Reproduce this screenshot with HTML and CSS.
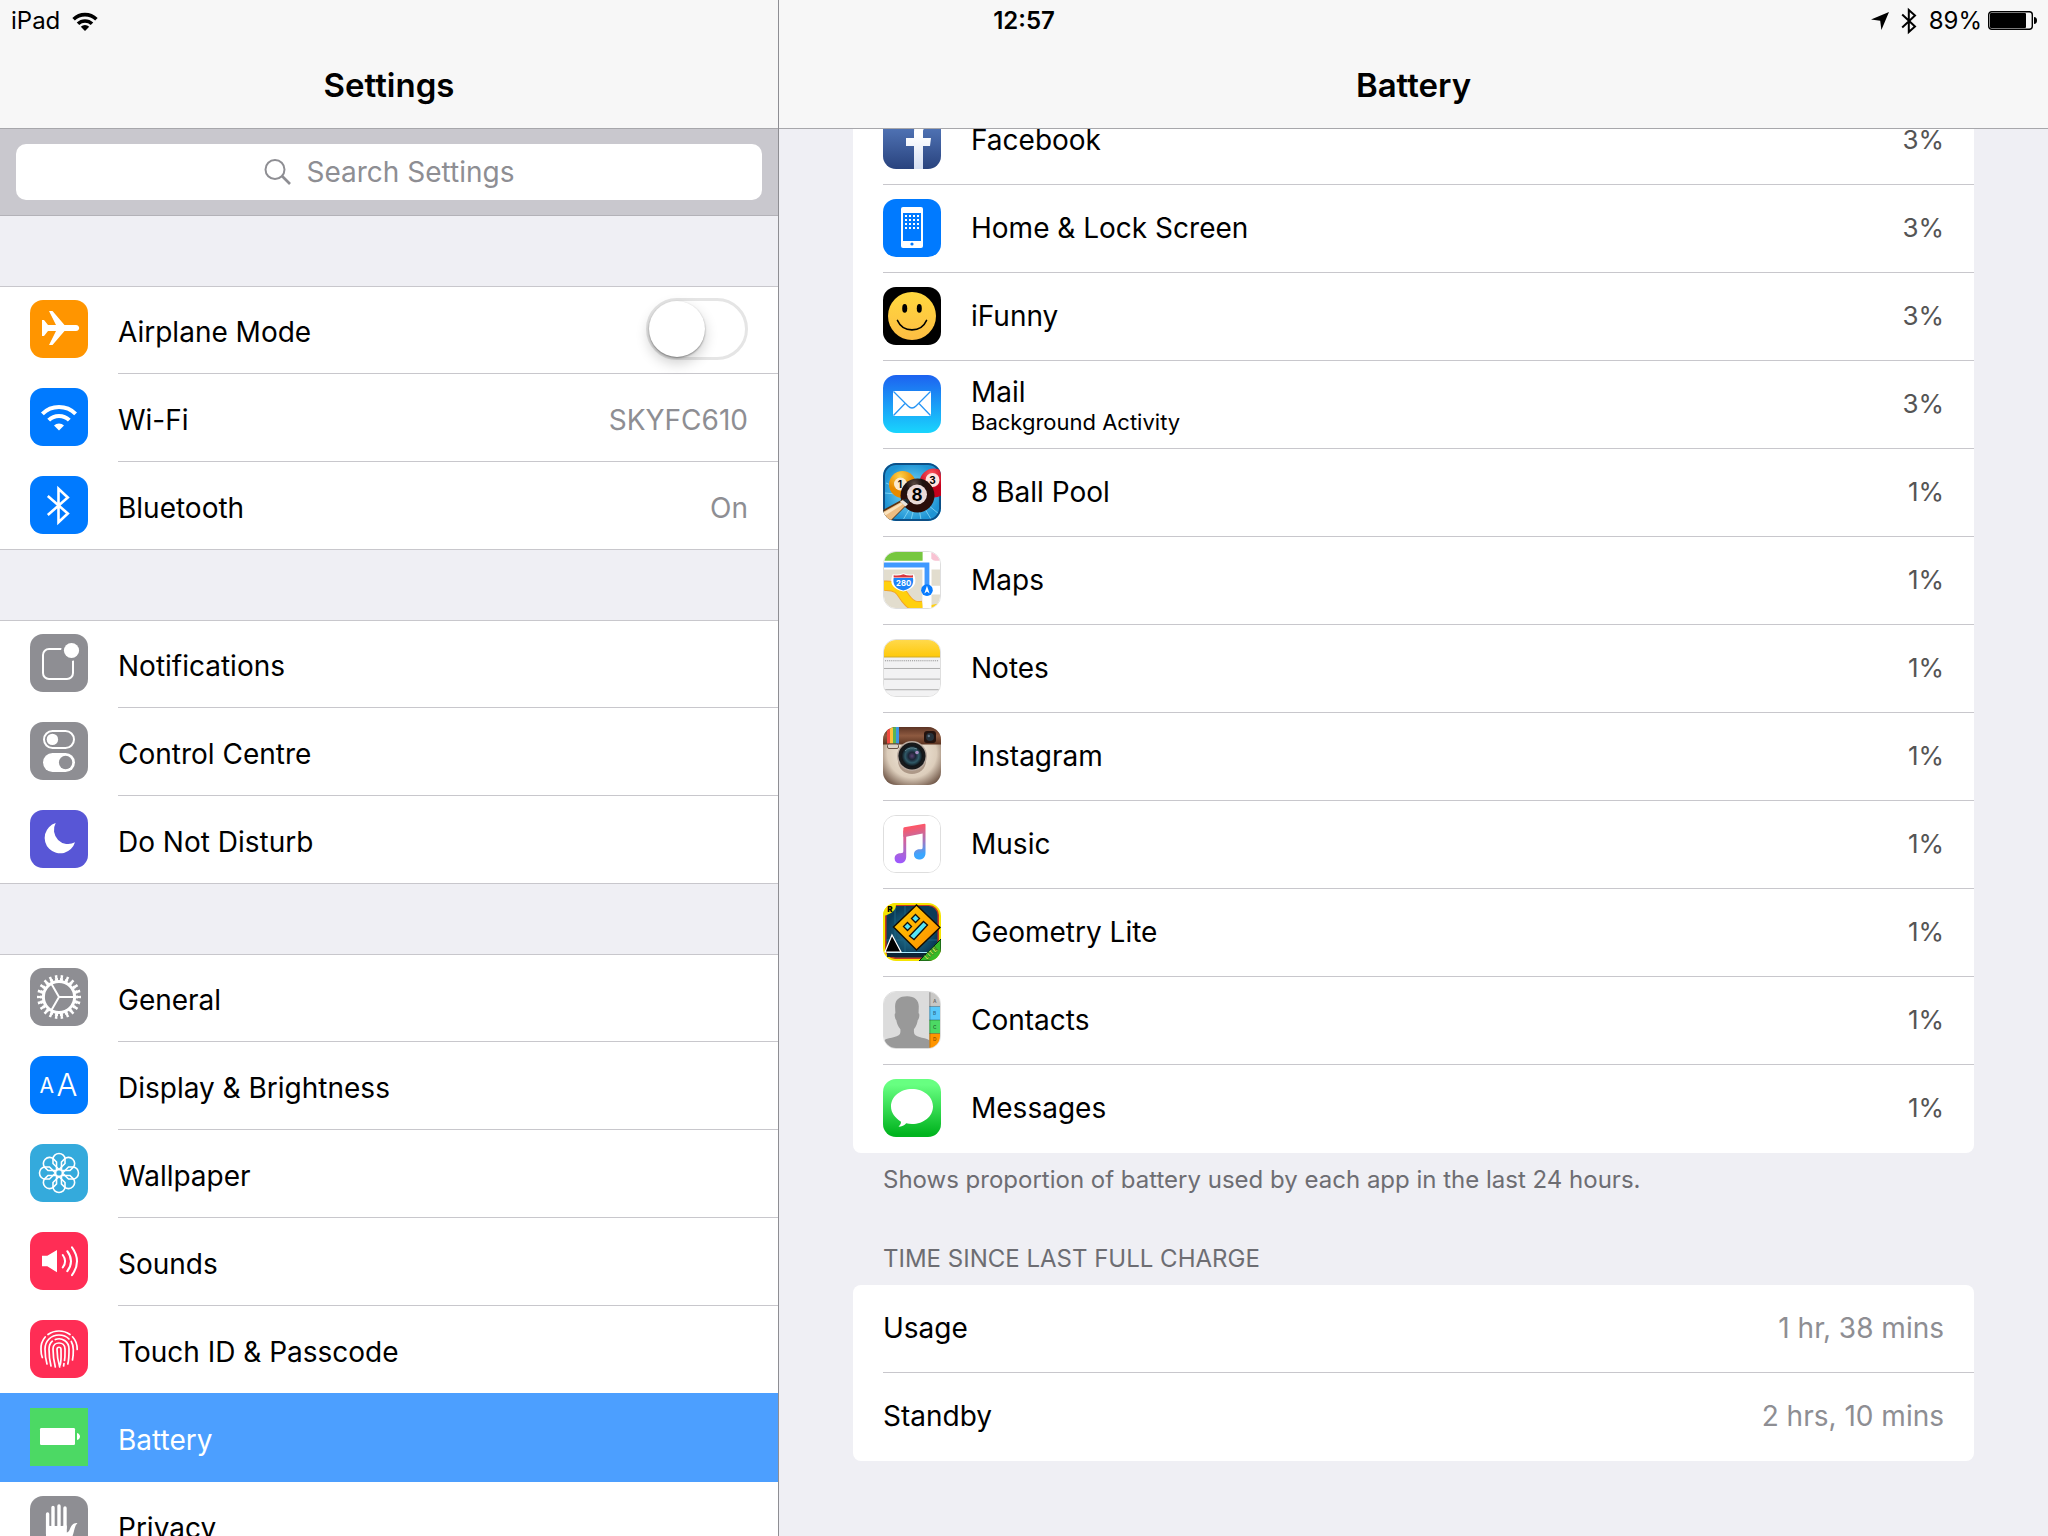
FILE: index.html
```html
<!DOCTYPE html>
<html lang="en-GB">
<head>
<meta charset="utf-8">
<meta name="viewport" content="width=device-width, initial-scale=1">
<title>Settings</title>
<link rel="stylesheet" href="styles.css">
</head>
<body>
<div class="status">
  <div class="status-side">
    <span>iPad</span>
    <svg class="status-wifi" viewBox="0 0 26 20" aria-hidden="true"><g fill="none" stroke="#000" stroke-width="3.6"><path d="M1.6 8.2a16.4 16.4 0 0 1 22.8 0"/><path d="M6 12.8a10 10 0 0 1 14 0"/></g><path d="M8.8 15.8a6 6 0 0 1 8.4 0L13 20z"/></svg>
  </div>
  <time class="clock">12:57</time>
  <div class="status-side status-end">
    <svg class="status-loc" viewBox="0 0 18 18" aria-hidden="true"><path d="M18 0 10.400 18 9.200 8.800 0 7.600z"/></svg>
    <svg class="status-bt" viewBox="0 0 16 28" aria-hidden="true"><path d="M1.200 7.500 14 19.500 7.800 25V3L14 8.500 1.200 20.500" fill="none" stroke="#000" stroke-width="2"/></svg>
    <span>89%</span>
    <svg class="status-cell" viewBox="0 0 49 19" aria-hidden="true"><rect x=".7" y=".7" width="43.600" height="17.600" rx="3" fill="none" stroke="#000" stroke-width="1.400"/><rect x="2" y="2" width="36" height="15" rx="1"/><path d="M46 6c2 0 3 1.500 3 3.500S48 13 46 13z"/></svg>
  </div>
</div>
<div class="screen">
  <section class="pane sidebar" aria-label="Settings">
    <header class="bar"><h1 class="title">Settings</h1></header>
    <div class="search">
      <label class="search-box">
        <svg class="search-icon" viewBox="0 0 27 26" aria-hidden="true"><g fill="none" stroke="#8e8e93" stroke-width="2"><circle cx="11" cy="10.500" r="9.500"/><path d="m18 17 8 8" stroke-width="2.600"/></g></svg>
        <input class="search-input" type="search" placeholder="Search Settings" aria-label="Search Settings">
      </label>
    </div>
    <nav class="groups">
      <ul class="group">
        <li><label class="row">
          <svg class="icon" viewBox="0 0 58 58"><rect width="58" height="58" fill="#ff9500"/><path fill="#fff" d="M12 20h2l4 5h8L19 11h3.500L34.500 25H46c2 0 3.200 1.500 3.200 3s-1.200 3-3.200 3H34.500l-12 14H19l7-14h-8l-4 5h-2z"/></svg>
          <span class="cell"><span class="name">Airplane Mode</span><input class="switch" type="checkbox" role="switch"></span></label></li>
        <li><a class="row" href="#wifi">
          <svg class="icon" viewBox="0 0 58 58"><rect width="58" height="58" fill="#007aff"/><g fill="none" stroke="#fff" stroke-width="4"><path d="M12.400 25.900a23.500 23.500 0 0 1 33.200 0"/><path d="M18.700 32.200a14.500 14.500 0 0 1 20.600 0"/></g><path fill="#fff" d="M24 37.500a7 7 0 0 1 10 0l-5 5z"/></svg>
          <span class="cell"><span class="name">Wi-Fi</span><span class="value">SKYFC610</span></span></a></li>
        <li><a class="row" href="#bluetooth">
          <svg class="icon" viewBox="0 0 58 58"><rect width="58" height="58" fill="#007aff"/><path fill="none" stroke="#fff" stroke-width="2.600" d="m17.800 20 20 17.500-9.300 8.800V12.700l9.300 8.800L17.800 39"/></svg>
          <span class="cell"><span class="name">Bluetooth</span><span class="value">On</span></span></a></li>
      </ul>
      <ul class="group">
        <li><a class="row" href="#notifications">
          <svg class="icon" viewBox="0 0 58 58"><rect width="58" height="58" fill="#8e8e93"/><rect x="13" y="15" width="30" height="30" rx="6" fill="none" stroke="#fff" stroke-width="2"/><circle cx="41.500" cy="16.500" r="10.500" fill="#8e8e93"/><circle cx="41.500" cy="16.500" r="7.600" fill="#fff"/></svg>
          <span class="cell"><span class="name">Notifications</span></span></a></li>
        <li><a class="row" href="#control">
          <svg class="icon" viewBox="0 0 58 58"><rect width="58" height="58" fill="#8e8e93"/><rect x="14" y="9" width="30" height="17" rx="8.500" fill="none" stroke="#fff" stroke-width="2"/><circle cx="22.400" cy="17.400" r="5.700" fill="#fff"/><rect x="13" y="31" width="32" height="19" rx="9.500" fill="#fff"/><circle cx="35.600" cy="40.500" r="6.700" fill="#8e8e93"/></svg>
          <span class="cell"><span class="name">Control Centre</span></span></a></li>
        <li><a class="row" href="#dnd">
          <svg class="icon" viewBox="0 0 58 58"><rect width="58" height="58" fill="#5856d6"/><path fill="#fff" d="M25.700 13A15.500 15.500 0 1 0 45 32.300 14.200 14.200 0 0 1 25.700 13z"/></svg>
          <span class="cell"><span class="name">Do Not Disturb</span></span></a></li>
      </ul>
      <ul class="group">
        <li><a class="row" href="#general">
          <svg class="icon" viewBox="0 0 58 58"><rect width="58" height="58" fill="#8e8e93"/><g fill="none" stroke="#fff"><circle cx="29" cy="29" r="15.600" stroke-width="3"/><circle cx="29" cy="29" r="17.600" stroke-width="3" pathLength="22" stroke-dasharray=".6 .4" stroke-dashoffset=".3"/><circle cx="29" cy="29" r="20.300" stroke-width="3.400" pathLength="22" stroke-dasharray=".42 .58" stroke-dashoffset=".21"/><path stroke-width="2" d="M29 29h15M29 29l-7.500-13M29 29l-7.500 13"/></g></svg>
          <span class="cell"><span class="name">General</span></span></a></li>
        <li><a class="row" href="#display">
          <svg class="icon" viewBox="0 0 58 58"><rect width="58" height="58" fill="#007aff"/><g fill="#fff" font-family="Inter, sans-serif"><text x="9.500" y="37.300" font-size="21">A</text><text x="26.500" y="39.700" font-size="31" font-weight="300">A</text></g></svg>
          <span class="cell"><span class="name">Display &amp; Brightness</span></span></a></li>
        <li><a class="row" href="#wallpaper">
          <svg class="icon" viewBox="0 0 58 58"><defs><path id="petal" d="M29 25.500 23 19.500V15a6 5.500 0 0 1 12 0v4.500z"/></defs><rect width="58" height="58" fill="#34aadc"/><g fill="none" stroke="#fff" stroke-width="1.600"><circle cx="29" cy="29" r="3.500"/><use href="#petal"/><use href="#petal" transform="rotate(45 29 29)"/><use href="#petal" transform="rotate(90 29 29)"/><use href="#petal" transform="rotate(135 29 29)"/><use href="#petal" transform="rotate(180 29 29)"/><use href="#petal" transform="rotate(225 29 29)"/><use href="#petal" transform="rotate(270 29 29)"/><use href="#petal" transform="rotate(315 29 29)"/></g></svg>
          <span class="cell"><span class="name">Wallpaper</span></span></a></li>
        <li><a class="row" href="#sounds">
          <svg class="icon" viewBox="0 0 58 58"><rect width="58" height="58" fill="#ff2d55"/><path fill="#fff" d="M12 23.700h5.300L27 18v22.300l-9.700-6H12z"/><path fill="none" stroke="#fff" stroke-width="2" stroke-linecap="round" d="M32.800 23q4.600 6.200 0 12.400M37.300 19.200q7.400 10 0 20M42 15.300q10 13.900 0 27.800"/></svg>
          <span class="cell"><span class="name">Sounds</span></span></a></li>
        <li><a class="row" href="#touchid">
          <svg class="icon" viewBox="0 0 58 58"><rect width="58" height="58" fill="#ff2d55"/><g fill="none" stroke="#fff" stroke-width="1.700" stroke-linecap="round"><path d="M18 14.500c6.500-4.700 15.500-4.700 22 0M15.200 17c-3 3.500-4.500 8-4.200 12.500 0 3 .3 5.500 1.300 8M42.500 16.800c3.200 3.500 4.800 8 4.700 12.700"/><path d="M17 44c-1.300-4.500-2-9-2-15 0-8 6-14 14-14 4 0 7.500 1.300 10 4M41.300 21.500c1.500 2.500 2 5 2 8 .1 4-.1 7-.8 10.500"/><path d="M21 46c-1.300-5-2-11-2-17 0-3.500 1.300-6 3.300-7.800M25.300 19.500c6.500-2.500 13.700 2 13.700 9.500.1 6 0 10-1.200 15"/><path d="M25.300 47C23.800 41 23 35 23 29c0-8 12-8 12 0 0 4.500.2 8-.5 11.500M34 43.500l-.4 2.500"/><path d="M29.700 47C28 41 27 35 27 29.500c0-3 4-3 4 0 0 6.500.5 10.500-.8 15.500"/></g></svg>
          <span class="cell"><span class="name">Touch ID &amp; Passcode</span></span></a></li>
        <li><a class="row selected" href="#battery" aria-current="page">
          <svg class="icon" viewBox="0 0 58 58"><rect width="58" height="58" fill="#4cd964"/><rect x="10" y="20" width="35" height="17" rx="1.300" fill="#fff"/><path fill="#fff" d="M47 25c2 .5 3 2 3 3.500s-1 3-3 3.500z"/></svg>
          <span class="cell"><span class="name">Battery</span></span></a></li>
        <li><a class="row" href="#privacy">
          <svg class="icon" viewBox="0 0 58 58"><rect width="58" height="58" fill="#8e8e93"/><g fill="none" stroke="#fff" stroke-width="3.400" stroke-linecap="round"><path d="M17.600 18v20M23 11.500v20M29 10v20M35 12v20"/></g><path fill="#fff" d="M16 29.500c6 .8 14 .8 20.800 0v7c1 0 2-1 2.700-2.500 1.500-4 3.500-7.500 8-7-2 2-2.500 4-3.500 8-1.500 6-4 14-10 16H22c-4-2-6-7-6-12z"/></svg>
          <span class="cell"><span class="name">Privacy</span></span></a></li>
      </ul>
    </nav>
  </section>

  <main class="pane detail">
    <header class="bar"><h2 class="title">Battery</h2></header>
    <div class="scroller">
      <ul class="card usage">
        <li class="app">
          <svg class="icon" viewBox="0 0 58 58"><defs><linearGradient id="fb" x2="0" y2="1"><stop stop-color="#5f86ca"/><stop offset="1" stop-color="#29437e"/></linearGradient><linearGradient id="fw" x2="0" y2="1"><stop offset=".3" stop-color="#fff"/><stop offset="1" stop-color="#d5dff2"/></linearGradient></defs><rect width="58" height="58" fill="url(#fb)"/><path fill="url(#fw)" d="M31 58V35h-8v-8h8v-6c0-8 4-12 11-12h7v8h-5c-3 0-4 1-4 4v6h8l-1 8h-7v23z"/></svg>
          <span class="name">Facebook</span><span class="share">3%</span></li>
        <li class="app">
          <svg class="icon" viewBox="0 0 58 58"><defs><pattern id="dots" x="22" y="16" width="4" height="4" patternUnits="userSpaceOnUse"><rect width="2" height="2" fill="#fff"/></pattern></defs><rect width="58" height="58" fill="#007aff"/><rect x="18" y="8" width="22" height="41" rx="2" fill="#fff"/><path fill="#007aff" d="M20 14h18v28H20z"/><path fill="url(#dots)" d="M22 16h14v14H22zM22 38h14v2H22z"/><circle cx="29" cy="45" r="1.600" fill="#007aff"/></svg>
          <span class="name">Home &amp; Lock Screen</span><span class="share">3%</span></li>
        <li class="app">
          <svg class="icon" viewBox="0 0 58 58"><defs><linearGradient id="smile" x2="0" y2="1"><stop stop-color="#ffd83e"/><stop offset="1" stop-color="#fdbd43"/></linearGradient></defs><rect width="58" height="58"/><circle cx="29" cy="29" r="24" fill="url(#smile)"/><ellipse cx="21.700" cy="21.400" rx="2.500" ry="4.400"/><ellipse cx="36.300" cy="21.400" rx="2.500" ry="4.400"/><path fill="none" stroke="#000" stroke-width="1.700" stroke-linecap="round" d="M14.500 33.500c5.500 12.500 23.500 12.500 29 0"/></svg>
          <span class="name">iFunny</span><span class="share">3%</span></li>
        <li class="app">
          <svg class="icon" viewBox="0 0 58 58"><defs><linearGradient id="mail" x2="0" y2="1"><stop stop-color="#1d62f0"/><stop offset="1" stop-color="#19d5fd"/></linearGradient></defs><rect width="58" height="58" fill="url(#mail)"/><rect x="10" y="16" width="38" height="25" rx="1" fill="#fff"/><path fill="none" stroke="#2795f5" stroke-width="1.300" d="m10.500 16.500 14.500 14.500q4 4 8 0L47.500 16.500M10.500 40.500 22 28.500M47.500 40.500 36 28.500"/></svg>
          <span class="name">Mail<small class="note">Background Activity</small></span><span class="share">3%</span></li>
        <li class="app">
          <svg class="icon" viewBox="0 0 58 58"><defs><radialGradient id="felt"><stop stop-color="#8be4ff"/><stop offset="1" stop-color="#1f94d4"/></radialGradient><radialGradient id="ball1" cx=".4" cy=".2"><stop stop-color="#ffd24a"/><stop offset="1" stop-color="#e88a00"/></radialGradient><radialGradient id="ball3" cx=".4" cy=".2"><stop stop-color="#ff5b62"/><stop offset="1" stop-color="#c4001c"/></radialGradient><radialGradient id="ball8" cx=".4" cy=".15"><stop stop-color="#5b4a42"/><stop offset=".5" stop-color="#1d1210"/><stop offset="1" stop-color="#2b0d0a"/></radialGradient></defs><rect width="58" height="58" fill="url(#felt)"/><path stroke="#a6ecff" stroke-width=".6" d="M34 33 2 30M34 33 3 20M34 33l-6 24M34 33l4 24M34 33l14 23M34 33l22 18M34 33 20 57"/><rect x="1" y="1" width="56" height="56" rx="12" fill="none" stroke="#0d4f86" stroke-width="2"/><circle cx="19.500" cy="21.500" r="13.500" fill="url(#ball1)"/><circle cx="17.500" cy="21" r="6.500" fill="#fbead0"/><circle cx="51" cy="20" r="14.500" fill="url(#ball3)"/><circle cx="49.500" cy="17" r="7" fill="#ffe3e0"/><circle cx="34.500" cy="32.500" r="17" fill="url(#ball8)"/><circle cx="34" cy="31.500" r="10" fill="#ead9d8"/><g font-family="Inter, sans-serif" font-weight="700" text-anchor="middle"><text x="17" y="24.500" font-size="10">1</text><text x="49.500" y="20.500" font-size="10">3</text><text x="34" y="37.500" font-size="17">8</text></g><path fill="#5c3212" d="m0 47 20-11 6 4L8 58H0z"/><path fill="#edbd83" d="m0 49 18-10 4.500 3.500L7 58H0z"/><path fill="#fbe3bd" d="m0 50 18-10 1.500 1.500L0 54z"/><path fill="#e8e4df" d="m17 38.500 3-1.500 5 4-2.500 2.500z"/><path fill="#1d2a35" d="m20 37 3.500-1.500q3 2 2.500 4L25 41z"/></svg>
          <span class="name">8 Ball Pool</span><span class="share">1%</span></li>
        <li class="app">
          <svg class="icon outlined" viewBox="0 0 58 58"><rect width="58" height="58" fill="#fff"/><path fill="#76c73f" d="M0 0h40v9H0z"/><path fill="#f8c3d3" d="M49 0h9v9h-5q-2 0-4-2z"/><path fill="#e2ddce" d="M0 18h40v40H0zM49 18h9v17h-9zM49 44h9v14h-9z"/><path fill="none" stroke="#f3a52b" stroke-width="11" d="M0 35c18-1 18 9 24 15 5 6 9 7 16 6"/><path fill="none" stroke="#ffd00e" stroke-width="9" d="M0 35c18-1 18 9 24 15 5 6 9 7 16 6"/><path fill="#ffd00e" d="M49 55l9-2v5h-9z"/><path fill="#fff" d="M40 9h9v49h-9z"/><path fill="none" stroke="#4099ff" stroke-width="5" d="M0 13.500h44.500V40"/><path fill="#fff" d="M9 23q5 1 11-1 6 2 11 1 6 14-11 18Q3 37 9 23z"/><path fill="#1c83f8" d="M10 27h20q2 10-10 13Q8 37 10 27z"/><path fill="#d9343e" d="M10 24q5 1 10-1 5 2 10 1v2.500H10z"/><text x="20.300" y="35" font-family="Inter, sans-serif" font-size="8" font-weight="700" fill="#fff" text-anchor="middle">280</text><circle cx="44.500" cy="39.500" r="6" fill="#087cff"/><path fill="#fff" d="m44.500 35 2.700 8-2.700-2-2.700 2z"/></svg>
          <span class="name">Maps</span><span class="share">1%</span></li>
        <li class="app">
          <svg class="icon outlined" viewBox="0 0 58 58"><defs><linearGradient id="pad" x2="0" y2="1"><stop stop-color="#ffd94b"/><stop offset="1" stop-color="#fec90a"/></linearGradient></defs><rect width="58" height="58" fill="#f2f2f3"/><path fill="url(#pad)" d="M0 0h58v17.500H0z"/><path fill="#cfab2d" d="M0 17h58v1H0z"/><path stroke="#888" stroke-dasharray="1 1" d="M1 21.500h56"/><path stroke="#aaa" d="M0 29.500h58M0 40.500h58M0 51.500h58"/></svg>
          <span class="name">Notes</span><span class="share">1%</span></li>
        <li class="app">
          <svg class="icon" viewBox="0 0 58 58"><defs><radialGradient id="body" cx=".5" cy=".45" r=".65"><stop stop-color="#f5ede0"/><stop offset=".65" stop-color="#dccdbb"/><stop offset="1" stop-color="#705748"/></radialGradient><linearGradient id="hide" x2="0" y2="1"><stop stop-color="#5c3425"/><stop offset=".5" stop-color="#8e5a40"/><stop offset="1" stop-color="#5a3220"/></linearGradient><radialGradient id="lens"><stop stop-color="#594071"/><stop offset=".35" stop-color="#1c2637"/><stop offset=".65" stop-color="#2f5a68"/><stop offset="1" stop-color="#0c1015"/></radialGradient></defs><rect width="58" height="58" fill="url(#body)"/><path fill="url(#hide)" d="M0 0h58v17.500H0z"/><path fill="#f0483e" d="M4 0h3v16.500H4z"/><path fill="#fcc13a" d="M7 0h3v16.500H7z"/><path fill="#58b454" d="M10 0h3v16.500h-3z"/><path fill="#3e95e4" d="M13 0h3v16.500h-3z"/><rect x="4.500" y="17" width="11" height="4.500" rx="1.500" fill="#ddd3c8" stroke="#6b5244"/><rect x="41" y="4" width="12" height="12" rx="3" fill="#24130f"/><circle cx="47" cy="10" r="4" fill="#27323b"/><circle cx="45.800" cy="9" r="1.200" fill="#678"/><ellipse cx="29" cy="34" rx="14" ry="13" fill="#8a7261" opacity=".6"/><circle cx="29" cy="29" r="15" fill="#b9aaa0"/><circle cx="29" cy="29" r="13.600" fill="#17191b"/><circle cx="29" cy="29" r="10.500" fill="url(#lens)"/><circle cx="34" cy="25.500" r="1.800" fill="#a58ac1"/><path d="M22 24q5-5 12-2" fill="none" stroke="#82aab5" stroke-width="1" opacity=".7"/></svg>
          <span class="name">Instagram</span><span class="share">1%</span></li>
        <li class="app">
          <svg class="icon outlined" viewBox="0 0 58 58"><defs><linearGradient id="tune" gradientUnits="userSpaceOnUse" x1="28" y1="10" x2="36" y2="46"><stop offset=".05" stop-color="#fc5769"/><stop offset=".5" stop-color="#a476c0"/><stop offset=".85" stop-color="#3ba6ff"/></linearGradient><linearGradient id="tune2" gradientUnits="userSpaceOnUse" x1="24" y1="12" x2="14" y2="48"><stop offset=".05" stop-color="#ff5668"/><stop offset=".6" stop-color="#b16ac4"/><stop offset="1" stop-color="#9c57ff"/></linearGradient></defs><rect width="58" height="58" fill="#fff"/><path fill="url(#tune2)" d="M20 15h3v27c0 5-3 7-7 7-3 0-5-2-5-5 0-4 3-5.500 6-5.500 2.500 0 3-.5 3-2.500z"/><path fill="url(#tune)" d="M20 13q0-1 1-1.300L42 8q1 0 1 1v29c0 5-3 7-7 7-3 0-5-2-5-5 0-4 3-5.500 6-5.500 2.500 0 3-.5 3-2.500V18l-17 3.500h-3z"/></svg>
          <span class="name">Music</span><span class="share">1%</span></li>
        <li class="app">
          <svg class="icon" viewBox="0 0 58 58"><defs><radialGradient id="night"><stop stop-color="#287f9c"/><stop offset="1" stop-color="#0a3b58"/></radialGradient><linearGradient id="cube" x2="1" y2="1"><stop stop-color="#ffcf00"/><stop offset="1" stop-color="#ff8b00"/></linearGradient></defs><rect width="58" height="58" fill="#f5e400"/><rect x="2" y="2" width="54" height="54" rx="10" fill="#c73a1c"/><rect x="3.500" y="3" width="51" height="51.500" rx="9" fill="url(#night)"/><path stroke="#1d6582" d="M12 3v51M22 3v51M3 37h51"/><path fill="#0b2436" d="M4 50h50v4H4z"/><path stroke="#a9ecff" d="M4 49.500h48"/><path fill="#000" stroke="#fff" stroke-width="1.200" d="m9 32 9 17H2z"/><path fill="url(#cube)" stroke="#150d00" stroke-width="1.500" d="m33.500 2 23.500 22.500L33.500 47 10.500 24z"/><g fill="#55e5f5" stroke="#111" stroke-width="1.300"><path d="m24.500 19.500 4 4-4 4-4-4zM32.500 11.500l4 4-4 4-4-4zM40.500 18.500l4 3.500L31 36.500 26.500 33z"/></g><path fill="#f5e400" d="M0 0h13q1 10-13 13z"/><text x="6.800" y="9" text-anchor="middle" font-family="Inter, sans-serif" font-size="8" font-weight="900">R</text><path fill="#36b928" stroke="#082708" d="M36 58 58 36v22z"/><text transform="translate(44 57) rotate(-43)" font-family="Inter, sans-serif" font-size="7" font-weight="900" fill="#c5ff55" stroke="#083b08" stroke-width=".4">LITE</text></svg>
          <span class="name">Geometry Lite</span><span class="share">1%</span></li>
        <li class="app">
          <svg class="icon outlined" viewBox="0 0 58 58"><rect width="58" height="58" fill="#dcdcdc"/><path fill="#999" d="M11.500 16C11 8 16 4.500 24 4.500S36.500 9 36 16l-.2 6c1.500 0 .7 6-.8 7-1 5-2 7-4 9.500v3c0 6 10 5 16 8.500v8H0v-8c6-3.500 17-2.500 17-8.500v-3c-2-2.500-3.300-4.500-4.300-9.500-1.500-1-2.300-7-.9-7z"/><path fill="#c8c7c5" d="M47 0h11v15H47z"/><path fill="#5ac8fb" d="M47 15h11v14H47z"/><path fill="#4cd964" d="M47 29h11v14H47z"/><path fill="#ff9500" d="M47 43h11v15H47z"/><path stroke="#000" stroke-opacity=".3" d="M47 15h11M47 29h11M47 43h11M47.500 0v58"/><g font-family="Inter, sans-serif" font-size="5" font-weight="700" fill="#000" fill-opacity=".45" text-anchor="middle"><text x="52.500" y="11">A</text><text x="52.500" y="24">B</text><text x="52.500" y="38">C</text><text x="52.500" y="51">D</text></g></svg>
          <span class="name">Contacts</span><span class="share">1%</span></li>
        <li class="app">
          <svg class="icon" viewBox="0 0 58 58"><defs><linearGradient id="msg" x2="0" y2="1"><stop offset=".1" stop-color="#67ff81"/><stop offset=".95" stop-color="#01b41f"/></linearGradient></defs><rect width="58" height="58" fill="url(#msg)"/><path fill="#fff" d="M29 10c11.600 0 21 7.600 21 17.500S40.600 45 29 45c-2 0-4-.2-5.800-.7-1.800 2-4.400 3.400-7.700 3.400 1.500-1.500 2.500-3 2.500-5C12 39 8 33.500 8 27.500 8 17.600 17.400 10 29 10z"/></svg>
          <span class="name">Messages</span><span class="share">1%</span></li>
      </ul>
      <p class="caption">Shows proportion of battery used by each app in the last 24 hours.</p>
      <h3 class="heading">TIME SINCE LAST FULL CHARGE</h3>
      <ul class="card">
        <li class="app"><span class="name">Usage</span><span class="value">1 hr, 38 mins</span></li>
        <li class="app"><span class="name">Standby</span><span class="value">2 hrs, 10 mins</span></li>
      </ul>
    </div>
  </main>
</div>
</body>
</html>
```
FILE: styles.css
```css
* { box-sizing: border-box; }

body {
  margin: 0;
  background: #efeff4;
  color: #000;
  font: 28px/36px Inter, "Liberation Sans", sans-serif;
}

ul, h1, h2, h3, p { margin: 0; padding: 0; list-style: none; }
a { color: inherit; text-decoration: none; }

/* Status bar, laid over both navigation bars */
.status {
  position: absolute;
  inset: 0 0 auto;
  z-index: 2;
  display: grid;
  grid-template-columns: 1fr auto 1fr;
  align-items: center;
  height: 41px;
  padding: 0 11px;
  font-size: 24px;
  line-height: 40px;
}
.status-side { display: flex; align-items: center; gap: 12px; }
.status-end { justify-content: flex-end; gap: 6px; }
.clock { font-weight: 600; }
.status-wifi { width: 26px; height: 20px; }
.status-loc { width: 18px; height: 18px; margin-right: 6px; }
.status-bt { width: 16px; height: 28px; margin-right: 6px; }
.status-cell { width: 49px; height: 19px; }

/* Split view */
.screen {
  display: grid;
  grid-template-columns: minmax(0, 779fr) minmax(0, 1269fr);
  height: 100vh;
  overflow: hidden;
}
.pane { min-height: 0; overflow: hidden; }
.sidebar { border-right: 1px solid #8e8e93; }
.bar {
  height: 129px;
  padding-top: 63px;
  border-bottom: 1px solid #a7a7ab;
  background: #f7f7f7;
  text-align: center;
}
.title { font-size: 33px; line-height: 44px; font-weight: 600; }

/* Search */
.search {
  padding: 15px 16px;
  border-bottom: 1px solid #b3b2b8;
  background: #c9c8ce;
}
.search-box {
  display: flex;
  align-items: center;
  justify-content: center;
  gap: 16px;
  height: 56px;
  border-radius: 10px;
  background: #fff;
}
.search-icon { width: 27px; height: 26px; }
.search-input {
  width: 208px;
  padding: 0;
  border: 0;
  outline: 0;
  background: none;
  font: inherit;
  appearance: none;
}
.search-input::placeholder { color: #8e8e93; opacity: 1; }
.search-input::-webkit-search-cancel-button { display: none; }

/* Sidebar rows */
.groups { display: grid; gap: 70px; padding-top: 70px; }
.group { background: #fff; box-shadow: inset 0 1px #c8c7cc; }
.row {
  display: flex;
  align-items: flex-start;
  height: 88px;
  padding-left: 30px;
}
.icon { flex: none; width: 58px; height: 58px; border-radius: 13px; }
.row .icon { margin-top: 14px; }
.cell {
  flex: 1;
  display: flex;
  align-items: center;
  justify-content: space-between;
  height: 88px;
  margin-left: 30px;
  padding: 4px 30px 0 0;
  border-bottom: 1px solid #c8c7cc;
}
.group li:last-child .row { box-shadow: inset 0 -1px #c8c7cc; }
.value { color: #8e8e93; }
.selected {
  position: relative;
  background: #4c9fff;
  color: #fff;
  box-shadow: 0 -1px #4c9fff;
}
.selected .icon { border-radius: 0; }
.selected .cell { border-color: transparent; }

.switch {
  appearance: none;
  width: 102px;
  height: 62px;
  margin: 0 0 6px;
  border: 3px solid #e5e5e5;
  border-radius: 31px;
}
.switch::before {
  content: "";
  display: block;
  width: 56px;
  height: 56px;
  border-radius: 50%;
  background: #fff;
  box-shadow: 0 1px 2px #0006, 0 6px 14px #0003;
}
.switch:checked { border-color: #4cd964; background: #4cd964; }
.switch:checked::before { margin-left: auto; }

/* Detail pane */
.detail .bar { position: relative; z-index: 1; }
.scroller { padding: 0 74px; }
.card { border-radius: 8px; background: #fff; }
.usage { margin-top: -32px; }
.app {
  display: flex;
  align-items: center;
  height: 88px;
  margin-left: 30px;
  padding: 0 30px 2px 0;
  border-bottom: 1px solid #c8c7cc;
}
.app:last-child { border-bottom-color: transparent; }
.app .name { flex: 1; }
.app .icon + .name { margin-left: 30px; }
.note { display: block; font-size: 22px; line-height: 24px; }
.share { color: #555; font-size: 26px; }
.outlined { border: 1px solid #dedede; }
.caption, .heading {
  color: #6d6d72;
  font-size: 24px;
  line-height: 32px;
  font-weight: 400;
}
.caption { padding: 11px 0 0 30px; }
.heading { padding: 47px 0 10px 30px; }
```
